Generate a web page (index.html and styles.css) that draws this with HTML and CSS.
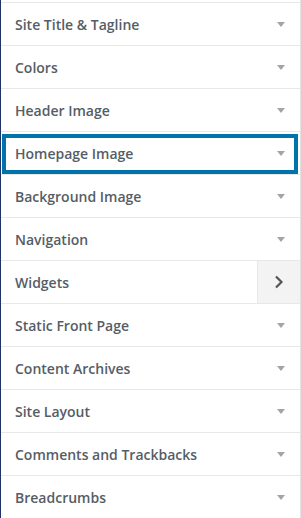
FILE: index.html
```html
<!DOCTYPE html>
<html lang="en">

<head>
    <meta charset="UTF-8">
    <meta name="viewport" content="width=device-width, initial-scale=1.0">
    <title>Customize</title>
    <link rel="stylesheet" href="styles.css">
</head>

<body>
    <div id="panel">
        <ul class="sections">
            <li class="section"><span class="title">Site Title &amp; Tagline</span><span class="arrow"></span></li>
            <li class="section"><span class="title">Colors</span><span class="arrow"></span></li>
            <li class="section"><span class="title">Header Image</span><span class="arrow"></span></li>
            <li class="section focused"><span class="title">Homepage Image</span><span class="arrow"></span></li>
            <li class="section"><span class="title">Background Image</span><span class="arrow"></span></li>
            <li class="section"><span class="title">Navigation</span><span class="arrow"></span></li>
            <li class="section">
                <span class="title">Widgets</span>
                <span class="open-btn">
                    <svg width="10" height="14" viewBox="0 0 10 14">
                        <path d="M2 1.5 L7.5 7 L2 12.5" fill="none" stroke="#555" stroke-width="2.2" />
                    </svg>
                </span>
            </li>
            <li class="section"><span class="title">Static Front Page</span><span class="arrow"></span></li>
            <li class="section"><span class="title">Content Archives</span><span class="arrow"></span></li>
            <li class="section"><span class="title">Site Layout</span><span class="arrow"></span></li>
            <li class="section"><span class="title">Comments and Trackbacks</span><span class="arrow"></span></li>
            <li class="section"><span class="title">Breadcrumbs</span><span class="arrow"></span></li>
        </ul>
    </div>
</body>

</html>
```

FILE: styles.css
```css
body {
    margin: 0;
    padding: 0;
    background-color: #fff;
    font-family: "Open Sans", "Noto Sans", sans-serif;
    color: #555d66;
}

#panel {
    width: 299px;
    height: 518px;
    border-left: 1px solid #1f3366;
    border-right: 1px solid #e2e2e2;
    box-sizing: border-box;
    padding-top: 2px;
    overflow: hidden;
    width: 301px;
}

.sections {
    list-style: none;
    margin: 0;
    padding: 0;
}

.section {
    position: relative;
    height: 42px;
    border-top: 1px solid #e8e8e8;
    display: flex;
    align-items: center;
    justify-content: space-between;
    padding-left: 14px;
}

.title {
    font-size: 14px;
    font-weight: 600;
    color: #555d66;
}

.arrow {
    width: 0;
    height: 0;
    margin-right: 15px;
    border-left: 4px solid transparent;
    border-right: 4px solid transparent;
    border-top: 5px solid #a0a5aa;
}

.open-btn {
    width: 42px;
    height: 42px;
    background-color: #f3f3f3;
    border-left: 1px solid #e8e8e8;
    display: flex;
    align-items: center;
    justify-content: center;
}

.focused::after {
    content: "";
    position: absolute;
    top: 2px;
    left: 1px;
    right: 2px;
    bottom: 0;
    border: 4px solid #0073aa;
}
```
